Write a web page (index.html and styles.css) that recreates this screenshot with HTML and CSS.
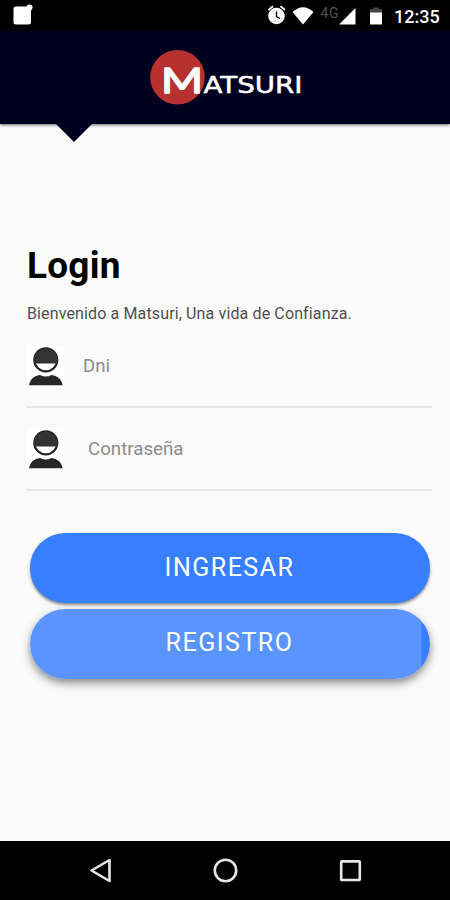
FILE: index.html
```html
<!DOCTYPE html>
<html lang="es">
<head>
  <meta charset="UTF-8">
  <meta name="viewport" content="width=device-width, initial-scale=1.0">
  <title>Matsuri - Login</title>
  <link rel="stylesheet" href="styles.css">
</head>
<body>
  <div class="screen">
    <div class="status-bar">
      <svg class="notification" width="20" height="22" viewBox="0 0 20 22">
        <rect x="0.5" y="3.5" width="17.5" height="18" rx="2.5" fill="#fff"/>
        <circle cx="16.5" cy="4.5" r="3" fill="#fff"/>
      </svg>
      <svg class="status-icons" width="120" height="22" viewBox="0 0 120 22">
        <!-- alarma -->
        <path d="M1.5 6 L6 2.3 M13.5 2.3 L18 6" stroke="#fff" stroke-width="1.8"/>
        <circle cx="9.5" cy="12" r="7" fill="none" stroke="#fff" stroke-width="2.6"/>
        <circle cx="9.5" cy="12" r="6" fill="#fff"/>
        <path d="M9.5 7.5 V12.5 L13 14.5" fill="none" stroke="#000" stroke-width="1.4"/>
        <!-- wifi -->
        <path d="M25.5 8 Q36 -1.5 46.5 8 L36 20.5 Z" fill="#fff"/>
        <text class="network" x="53.5" y="14" textLength="18">4G</text>
        <!-- señal -->
        <path d="M88.5 4 V20.5 H72 Z" fill="#fff"/>
        <!-- bateria -->
        <path d="M106 3.5 H112 V5 H115 V9 H103 V5 H106 Z" fill="#444"/>
        <rect x="103" y="8.5" width="12" height="12" fill="#fff"/>
      </svg>
      <span class="clock">12:35</span>
    </div>

    <header class="header">
      <svg width="160" height="60" viewBox="0 0 160 60">
        <circle cx="32.5" cy="30.2" r="27.3" fill="#b93030"/>
        <text class="logo-m" x="16" y="46" textLength="42" lengthAdjust="spacingAndGlyphs">M</text>
        <text class="logo-text" x="58.5" y="46.3" textLength="99" lengthAdjust="spacingAndGlyphs">ATSURI</text>
      </svg>
      <div class="arrow"></div>
    </header>

    <main class="login">
      <h1>Login</h1>
      <p class="welcome">Bienvenido a Matsuri, Una vida de Confianza.</p>

      <div class="field">
        <svg class="user" width="37" height="42" viewBox="0 0 37 42">
          <circle cx="18.8" cy="14.8" r="11.5" fill="#fff" stroke="#222" stroke-width="2.2"/>
          <path d="M7.9 18.6 A11.5 11.5 0 1 1 29.7 18.6 Z" fill="#333"/>
          <path d="M2 40.2 C3.5 33.5 7 31 13 30 Q18.8 33 24.6 30 C30.5 31 34 33.5 35.8 40.2 Z" fill="#262626"/>
        </svg>
        <span class="placeholder">Dni</span>
      </div>

      <div class="field password">
        <svg class="user" width="37" height="42" viewBox="0 0 37 42">
          <circle cx="18.8" cy="14.8" r="11.5" fill="#fff" stroke="#222" stroke-width="2.2"/>
          <path d="M7.9 18.6 A11.5 11.5 0 1 1 29.7 18.6 Z" fill="#333"/>
          <path d="M2 40.2 C3.5 33.5 7 31 13 30 Q18.8 33 24.6 30 C30.5 31 34 33.5 35.8 40.2 Z" fill="#262626"/>
        </svg>
        <span class="placeholder">Contraseña</span>
      </div>

      <div class="buttons">
        <button class="btn">INGRESAR</button>
        <button class="btn btn-registro">REGISTRO</button>
      </div>
    </main>

    <nav class="nav-bar">
      <svg width="24" height="28" viewBox="0 0 24 28">
        <path d="M2.5 13.5 L20.5 3 V24 Z" fill="none" stroke="#e6e6e6" stroke-width="2.6" stroke-linejoin="round"/>
      </svg>
      <svg width="28" height="28" viewBox="0 0 28 28">
        <circle cx="13.5" cy="13.5" r="10.7" fill="none" stroke="#e6e6e6" stroke-width="2.6"/>
      </svg>
      <svg width="24" height="28" viewBox="0 0 24 28">
        <rect x="3.2" y="4.4" width="18.6" height="18.6" rx="0.5" fill="none" stroke="#e6e6e6" stroke-width="2.6"/>
      </svg>
    </nav>
  </div>
</body>
</html>
```

FILE: styles.css
```css
* {
  box-sizing: border-box;
}

body {
  margin: 0;
  font-family: Roboto, "Liberation Sans", sans-serif;
  background-color: #fafafa;
}

.screen {
  display: flex;
  flex-direction: column;
  width: 450px;
  height: 900px;
  overflow: hidden;
}

.status-bar {
  display: flex;
  align-items: center;
  height: 31px;
  padding: 0 12px 0 13px;
  background-color: #000;
  color: #fff;
}

.notification {
  margin-bottom: 3px;
}

.status-icons {
  margin-left: auto;
  margin-top: -1px;
}

.network {
  font-size: 14px;
  fill: #505050;
}

.clock {
  width: 44px;
  margin-top: 2px;
  margin-left: 7px;
  font-size: 18px;
  font-weight: 500;
  text-align: right;
  white-space: nowrap;
}

.header {
  position: relative;
  display: flex;
  justify-content: center;
  height: 93px;
  padding-top: 16px;
  background-color: #00001f;
  box-shadow: 0 1px 3px rgba(0, 0, 0, 0.6);
}

.logo-m {
  font-family: Lato, sans-serif;
  font-size: 34px;
  font-weight: 400;
  fill: #fff;
  stroke: #fff;
  stroke-width: 1.4;
  stroke-linejoin: round;
}

.logo-text {
  font-family: "DejaVu Sans", sans-serif;
  font-size: 23px;
  fill: #fff;
  stroke: #fff;
  stroke-width: 0.5;
}

/* flecha debajo del header */
.arrow {
  position: absolute;
  left: 55px;
  top: 92px;
  border-left: 19px solid transparent;
  border-right: 19px solid transparent;
  border-top: 19px solid #00001f;
}

.login {
  flex: 1;
  padding: 120px 18px 0 27px;
}

h1 {
  margin: 0;
  font-size: 37px;
  line-height: 44px;
  letter-spacing: 0.2px;
  color: #000;
}

.welcome {
  margin: 16px 0 0;
  font-size: 16px;
  line-height: 20px;
  letter-spacing: 0.13px;
  color: #505050;
  white-space: nowrap;
}

.field {
  display: flex;
  align-items: center;
  height: 83px;
  border-bottom: 2px solid #e6e6e6;
}

.field:first-of-type {
  height: 84px;
  padding-top: 2px;
}

.user {
  background-color: #fff;
}

.placeholder {
  margin-left: 19px;
  font-size: 18.7px;
  color: #8c8c8c;
}

.password .placeholder {
  margin-left: 24px;
}

.buttons {
  display: flex;
  flex-direction: column;
  gap: 6px;
  margin: 42px 2px 0 3px;
}

.btn {
  height: 70px;
  padding: 0 1px 2px 0;
  border: none;
  border-radius: 35px;
  background-color: #387fff;
  box-shadow: 0 2px 3px rgba(0, 0, 0, 0.45);
  color: #fff;
  font-family: inherit;
  font-size: 25px;
  letter-spacing: 1.5px;
}

/* boton presionado, el efecto no llega al borde derecho */
.btn-registro {
  padding-bottom: 3px;
  background: linear-gradient(to right, #5a94ff 391px, #387fff 392px);
  box-shadow: 0 4px 9px rgba(0, 0, 0, 0.45);
}

.nav-bar {
  display: flex;
  justify-content: space-between;
  align-items: center;
  height: 59px;
  padding: 0 88px 0 89px;
  background-color: #000;
}
```
